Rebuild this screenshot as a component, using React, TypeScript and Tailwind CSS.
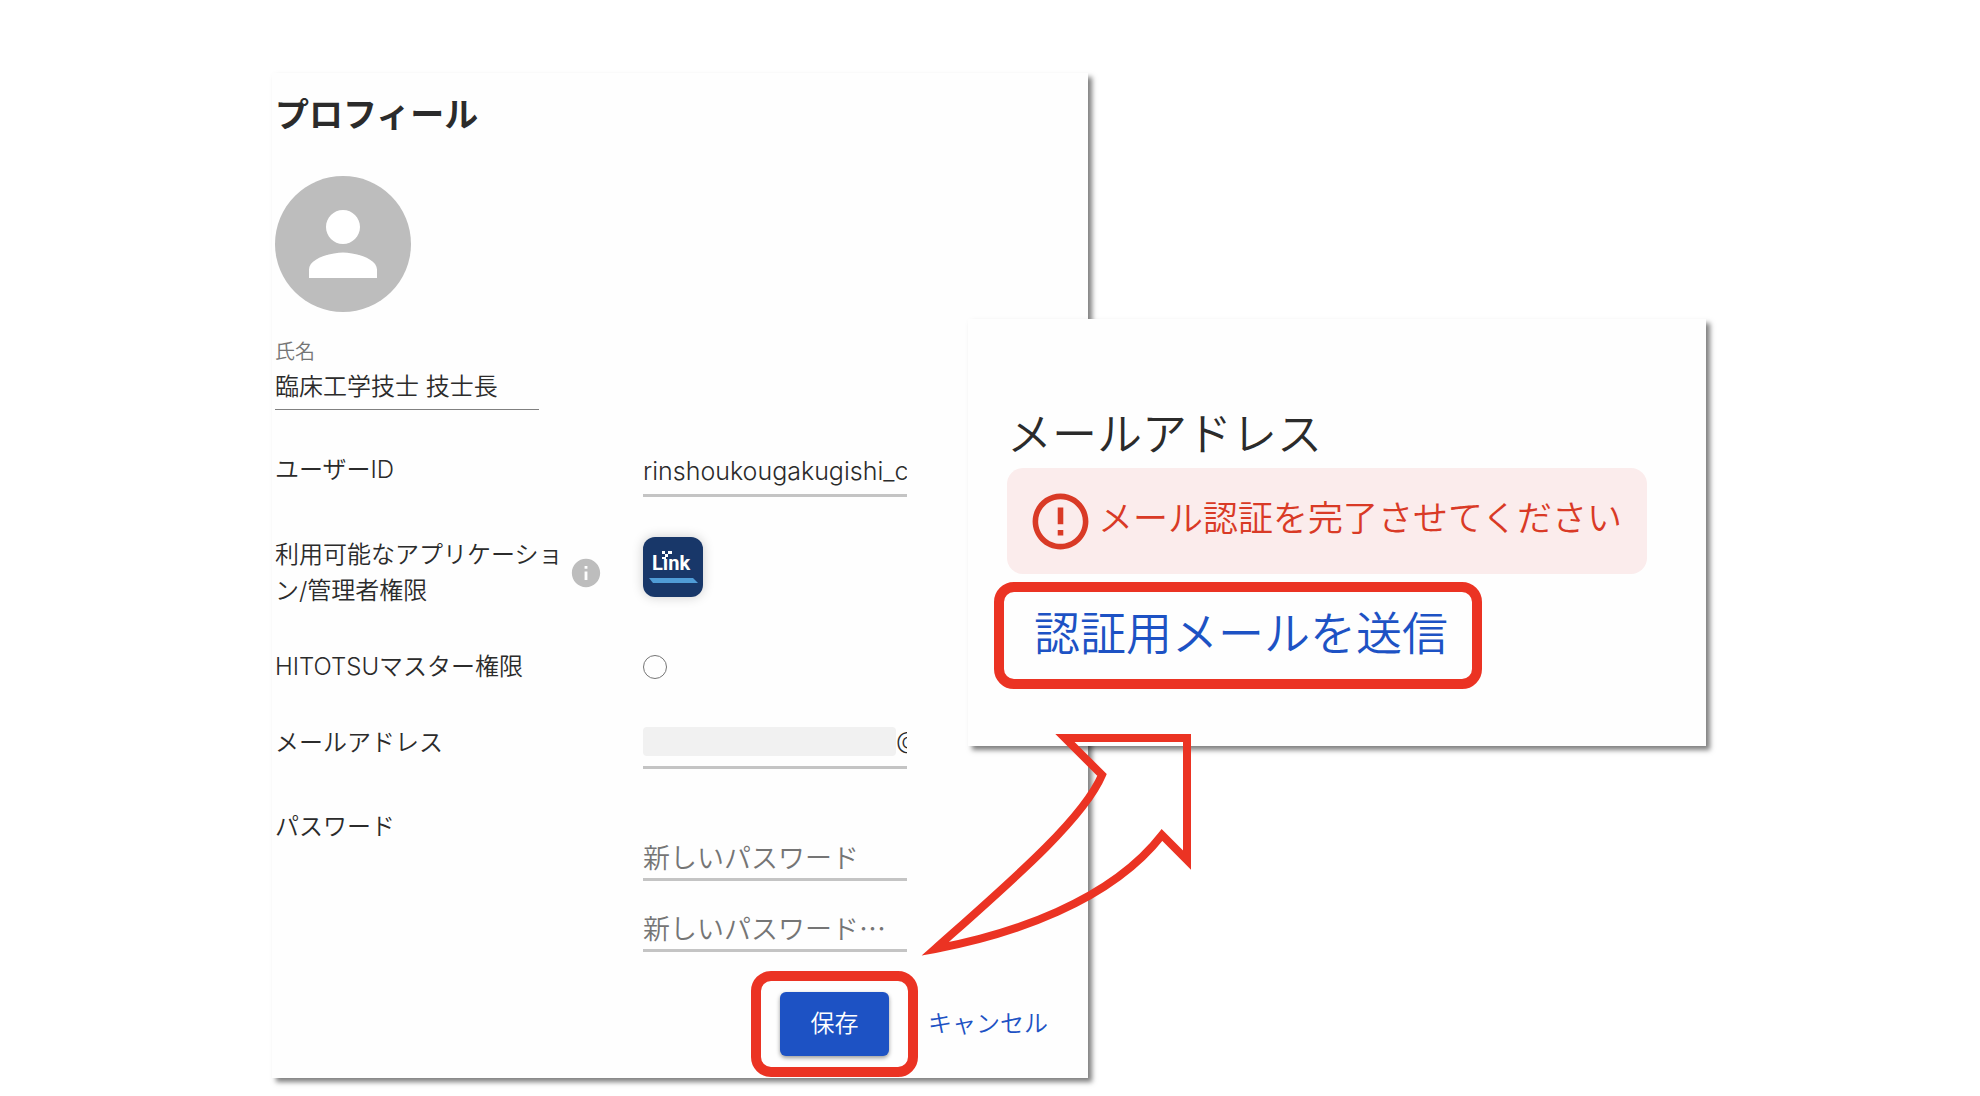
import { useState } from 'react';
import type { FormEvent } from 'react';
import { MdErrorOutline, MdInfo, MdPerson } from 'react-icons/md';

type PasswordField = {
  id: string;
  label: string;
  placeholder: string;
};

const passwordFields: PasswordField[] = [
  { id: 'password', label: '新しいパスワード', placeholder: '新しいパスワード' },
  { id: 'password-confirm', label: '新しいパスワード(確認)', placeholder: '新しいパスワード…' },
];

const LinkLogo = () => (
  <svg
    viewBox="0 0 60 60"
    role="img"
    aria-label="Link"
    className="size-[60px] self-start rounded-xl bg-[#183769] shadow-[0_0_12px_rgba(0,0,0,0.2)]"
  >
    <text x="9" y="33" fontSize="20" fontWeight="700" fill="#fff" fontFamily="Roboto, sans-serif">
      Lınk
    </text>
    <path d="M19 14h3v3h-3zM22 17h3v3h-3zM25 14h4v3h-4zM19 20h4v2h-4z" fill="#fff" />
    <path d="M6 41h44l5 5H10z" fill="#4f9cd7" />
  </svg>
);

/**
 * Curved arrow going from the save button to the mail verification panel
 */
const Arrow = () => (
  <svg
    viewBox="916 728 280 236"
    fill="none"
    stroke="#eb3323"
    strokeWidth="8"
    strokeMiterlimit="6"
    className="pointer-events-none absolute -left-[52px] top-[409px] h-[236px] w-[280px]"
    aria-hidden="true"
  >
    <path d="M935 949C1008 884 1083 820 1102 775L1065 738H1187V860L1162 835C1110 902 1010 935 935 949Z" />
  </svg>
);

const Profile = () => {
  const [name, setName] = useState('臨床工学技士 技士長');
  const [userId, setUserId] = useState('rinshoukougakugishi_c');
  const [mail, setMail] = useState('@');

  const handleSubmit = (e: FormEvent) => e.preventDefault();

  return (
    <form
      onSubmit={handleSubmit}
      className="min-w-0 bg-[#fefefe] pb-px pl-[3px] pt-5 shadow-[4px_4px_5px_rgba(0,0,0,0.5)]"
    >
      <h1 className="text-[34px] font-bold leading-[44px]">プロフィール</h1>
      <div className="mt-[39px] flex size-[136px] items-center justify-center rounded-full bg-[#bdbdbd]">
        <MdPerson className="size-[102px] text-white" />
      </div>

      <div className="mt-[25px] flex w-[264px] flex-col border-b border-[#808080]">
        <label htmlFor="name" className="text-xl leading-[30px] text-[#757575]">
          氏名
        </label>
        <input
          id="name"
          value={name}
          onChange={(e) => setName(e.target.value)}
          className="h-[42px] w-full pb-2 outline-none"
        />
      </div>

      <div className="mt-[42px] grid grid-cols-[368px_264px]">
        <label htmlFor="user-id" className="leading-9">
          ユーザーID
        </label>
        <input
          id="user-id"
          value={userId}
          onChange={(e) => setUserId(e.target.value)}
          className="h-[45px] border-b-[3px] border-[#c4c4c4] pb-1 text-[25px] outline-none"
        />
      </div>

      <div className="mt-10 grid grid-cols-[368px_264px] items-center">
        <div className="flex items-center">
          <p className="w-[288px] leading-9">利用可能なアプリケーション/管理者権限</p>
          <MdInfo className="ml-1.5 size-[34px] text-[#bdbdbd]" />
        </div>
        <LinkLogo />
      </div>

      <div className="mt-10 grid grid-cols-[368px_264px] items-center">
        <label htmlFor="master" className="leading-9">
          HITOTSUマスター権限
        </label>
        <input
          id="master"
          type="radio"
          className="size-6 appearance-none rounded-full border border-[#757575] checked:bg-[#1d52c4]"
        />
      </div>

      <div className="mt-10 grid grid-cols-[368px_264px]">
        <label htmlFor="mail" className="leading-9">
          メールアドレス
        </label>
        <div className="flex h-11 overflow-hidden border-b-[3px] border-[#c4c4c4]">
          <span className="mt-0.5 h-[29px] w-[253px] shrink-0 rounded bg-[#f1f1f1]" />
          <input
            id="mail"
            value={mail}
            onChange={(e) => setMail(e.target.value)}
            className="h-8 w-[11px] shrink-0 outline-none"
          />
        </div>
      </div>

      <div className="mt-10 grid grid-cols-[368px_264px]">
        <p className="leading-9">パスワード</p>
        <div className="flex flex-col gap-[26px] pt-[27px]">
          {passwordFields.map((field) => (
            <input
              key={field.id}
              id={field.id}
              type="password"
              aria-label={field.label}
              placeholder={field.placeholder}
              className="h-[45px] border-b-[3px] border-[#c4c4c4] pb-0.5 font-['Noto_Sans_CJK_JP',sans-serif] text-[27px] outline-none placeholder:text-[#757575]"
            />
          ))}
        </div>
      </div>

      <div className="mr-10 mt-[19px] flex items-center justify-end gap-2.5">
        <div className="rounded-[20px] border-[10px] border-[#eb3323] px-[19px] py-[11px]">
          <button
            type="submit"
            className="h-16 w-[109px] rounded-md bg-[#1d52c4] text-white shadow-[0_2px_4px_rgba(0,0,0,0.4)]"
          >
            保存
          </button>
        </div>
        <button type="button" className="text-[#1d52c4]">
          キャンセル
        </button>
      </div>
    </form>
  );
};

const MailVerification = () => (
  <section className="relative -ml-[120px] mt-[246px] self-start bg-[#fefefe] pb-[57px] pl-[26px] shadow-[4px_4px_5px_rgba(0,0,0,0.5)]">
    <h2 className="ml-[13px] pt-[86px] text-[45px] leading-[60px]">メールアドレス</h2>
    <div className="ml-[13px] mr-[59px] mt-[3px] flex h-[106px] items-center gap-1 rounded-2xl bg-[#fbecec] pl-5 text-[#d93a26]">
      <MdErrorOutline className="size-[67px] shrink-0" />
      <p className="whitespace-nowrap pb-1.5 text-[35px]">メール認証を完了させてください</p>
    </div>
    <div className="mt-2 inline-block rounded-[20px] border-[10px] border-[#eb3323] pb-[13px] pl-[30px] pr-6 pt-[9px]">
      <button type="button" className="block whitespace-nowrap text-[46px] leading-[65px] text-[#1d52c4]">
        認証用メールを送信
      </button>
    </div>
    <Arrow />
  </section>
);

const App = () => {
  return (
    <main
      lang="ja"
      className="min-h-screen bg-white pb-[18px] pt-[73px] font-['Inter','Noto_Sans_CJK_JP',sans-serif] text-2xl font-[350] text-[#2b2b2b]"
    >
      <div className="mx-auto grid max-w-[1436px] grid-cols-[816fr_618fr] pr-0.5">
        <Profile />
        <MailVerification />
      </div>
    </main>
  );
};

export default App;
